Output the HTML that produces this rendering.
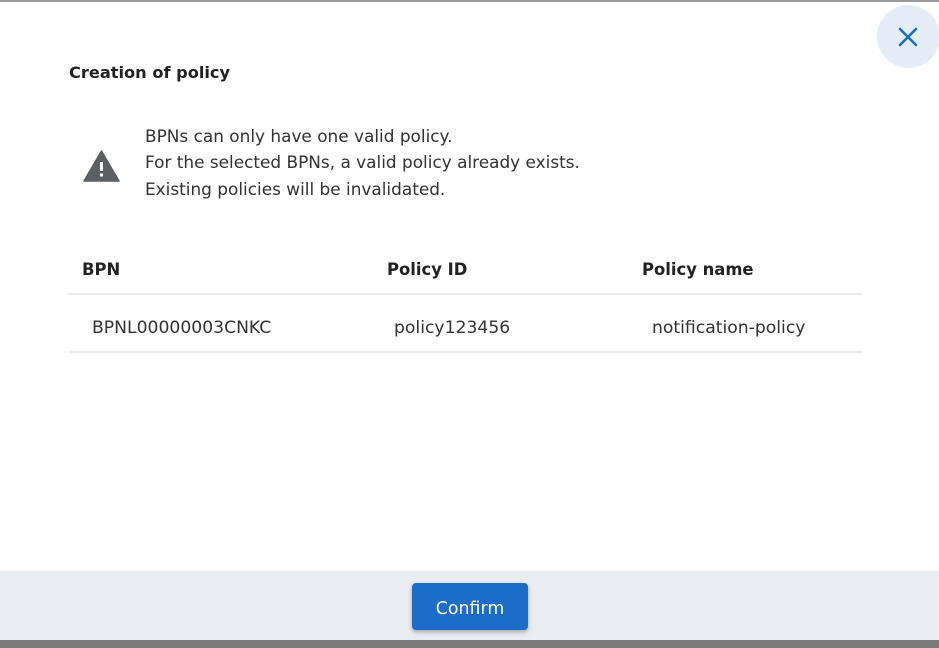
<!DOCTYPE html>
<html><head><meta charset="utf-8"><style>
html,body{margin:0;padding:0;width:939px;height:648px;overflow:hidden;background:#6f6f6f;font-family:"DejaVu Sans","Liberation Sans",sans-serif;}
.bar{position:absolute;left:0;top:0;width:939px;height:2px;background:#9a9a9a;}
.dlg{position:absolute;left:0;top:2px;width:939px;height:638px;background:#fff;}
.footer{position:absolute;left:0;top:571px;width:939px;height:69px;background:#e9ecf1;}
.btn{position:absolute;left:412px;top:583px;width:116px;height:47px;background:#1b6dc9;border-radius:4px;box-shadow:0 2px 4px rgba(0,0,0,.3);color:#fff;font-size:17.4px;line-height:52px;text-align:center;}
.close{position:absolute;left:877px;top:5px;width:63px;height:63px;border-radius:50%;background:#e3ecf7;}
.t{position:absolute;color:#222;white-space:nowrap;}
.title{left:69px;top:63px;font-size:16.2px;font-weight:bold;}
.msg{left:145px;font-size:16.9px;color:#333;}
.th{top:260px;font-size:16.4px;font-weight:bold;}
.td{top:318px;font-size:17.2px;color:#333;}
.line{position:absolute;height:2px;background:#e9e9e9;}
.bottom{position:absolute;left:0;top:640px;width:939px;height:8px;background:#7a7a7a;}
</style></head><body>
<div class="bar"></div>
<div class="dlg"></div>
<div class="close"><svg width="63" height="63" viewBox="0 0 63 63"><path d="M23 24 L39 40 M39 24 L23 40" stroke="#1b6dc9" stroke-width="2.6" stroke-linecap="round"/></svg></div>
<div class="t title">Creation of policy</div>
<svg style="position:absolute;left:83px;top:150px" width="37" height="32" viewBox="0 0 37 32"><path d="M18.5 1 L36 31 L1 31 Z" fill="#5c5f63" stroke="#5c5f63" stroke-linejoin="round" stroke-width="1.5"/><rect x="17" y="12" width="3" height="9" fill="#fff"/><rect x="17" y="23.5" width="3" height="3" fill="#fff"/></svg>
<div class="t msg" style="top:126px">BPNs can only have one valid policy.</div>
<div class="t msg" style="top:152px">For the selected BPNs, a valid policy already exists.</div>
<div class="t msg" style="top:179px">Existing policies will be invalidated.</div>
<div class="t th" style="left:82px">BPN</div>
<div class="t th" style="left:387px">Policy ID</div>
<div class="t th" style="left:642px">Policy name</div>
<div class="line" style="left:68px;top:293px;width:794px"></div>
<div class="t td" style="left:92px">BPNL00000003CNKC</div>
<div class="t td" style="left:394px">policy123456</div>
<div class="t td" style="left:652px">notification-policy</div>
<div class="line" style="left:70px;top:351px;width:792px"></div>
<div class="footer"></div>
<div class="btn">Confirm</div>
<div class="bottom"></div>
</body></html>
